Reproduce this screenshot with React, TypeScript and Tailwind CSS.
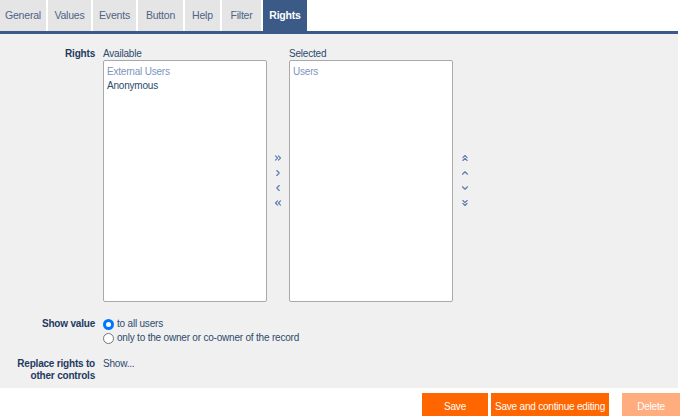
import React from "react";
import { ChevronRight, ChevronLeft, ChevronsRight, ChevronsLeft, ChevronUp, ChevronDown, ChevronsUp, ChevronsDown } from "lucide-react";

const TABS = [
  { name: "General", w: "w-[46px]" },
  { name: "Values", w: "w-[43px]" },
  { name: "Events", w: "w-[43px]" },
  { name: "Button", w: "w-[45px]" },
  { name: "Help", w: "w-[35px]" },
  { name: "Filter", w: "w-[39px]" },
  { name: "Rights", w: "w-[44px]", active: true },
];

function Radio({ checked }: { checked?: boolean }) {
  return checked ? (
    <span className="w-[11px] h-[11px] rounded-full bg-[#0075ff] flex items-center justify-center shrink-0">
      <span className="w-[5px] h-[5px] rounded-full bg-white" />
    </span>
  ) : (
    <span className="w-[11px] h-[11px] rounded-full border border-[#767676] bg-white shrink-0" />
  );
}

export default function App() {
  const arrowCls = "text-[#5b7bb0]";
  return (
    <div className="w-[680px] h-[416px] overflow-hidden bg-white text-[10px] tracking-[-0.2px] text-[#2d4a6e] font-['Liberation_Sans',Arial,sans-serif]">
      {/* Tabs */}
      <div className="flex gap-[2px] h-[31px]">
        {TABS.map((t) => (
          <div
            key={t.name}
            className={`${t.w} flex items-center justify-center text-[10.5px] ${t.active ? "bg-[#3b5a87] text-white font-bold" : "bg-[#e5e5e5] text-[#4d6485]"}`}
          >
            {t.name}
          </div>
        ))}
      </div>
      <div className="w-[678px] h-[3px] bg-[#3b5a87]" />

      {/* Panel */}
      <div className="w-[678px] h-[354px] bg-[#f0f0f0] pt-[13px]">
        {/* Rights */}
        <div className="flex">
          <div className="w-[96px] text-right font-bold text-[#1f3a60] leading-[13px] pr-[1px]">Rights</div>
          <div className="ml-[7px] flex">
            <div className="flex flex-col">
              <div className="leading-[13px]">Available</div>
              <div className="w-[164px] h-[242px] bg-white border border-[#a9a9a9] rounded-[2px] pl-[3px] pt-[4px] leading-[14px]">
                <div className="text-[#7b96c0]">External Users</div>
                <div className="text-[#2d4a6e]">Anonymous</div>
              </div>
            </div>
            <div className="w-[22px] flex flex-col items-center justify-center gap-[5px] pt-[11px]">
              <ChevronsRight size={10} strokeWidth={2.8} className={arrowCls} />
              <ChevronRight size={10} strokeWidth={2.8} className={arrowCls} />
              <ChevronLeft size={10} strokeWidth={2.8} className={arrowCls} />
              <ChevronsLeft size={10} strokeWidth={2.8} className={arrowCls} />
            </div>
            <div className="flex flex-col">
              <div className="leading-[13px]">Selected</div>
              <div className="w-[164px] h-[242px] bg-white border border-[#a9a9a9] rounded-[2px] pl-[3px] pt-[4px] leading-[14px]">
                <div className="text-[#7b96c0]">Users</div>
              </div>
            </div>
            <div className="w-[24px] flex flex-col items-center justify-center gap-[5px] pt-[11px]">
              <ChevronsUp size={10} strokeWidth={2.8} className={arrowCls} />
              <ChevronUp size={10} strokeWidth={2.8} className={arrowCls} />
              <ChevronDown size={10} strokeWidth={2.8} className={arrowCls} />
              <ChevronsDown size={10} strokeWidth={2.8} className={arrowCls} />
            </div>
          </div>
        </div>

        {/* Show value */}
        <div className="flex mt-[15px]">
          <div className="w-[96px] text-right font-bold text-[#1f3a60] leading-[14px] pr-[1px]">Show value</div>
          <div className="ml-[7px] flex flex-col">
            <label className="flex items-center gap-[3px] leading-[14px]">
              <Radio checked />
              <span>to all users</span>
            </label>
            <label className="flex items-center gap-[3px] leading-[14px]">
              <Radio />
              <span>only to the owner or co-owner of the record</span>
            </label>
          </div>
        </div>

        {/* Replace rights */}
        <div className="flex mt-[13px]">
          <div className="w-[96px] text-right font-bold text-[#1f3a60] leading-[12px] pr-[1px]">
            Replace rights to
            <br />
            other controls
          </div>
          <div className="ml-[7px] leading-[12px]">Show...</div>
        </div>
      </div>

      {/* Buttons */}
      <div className="flex justify-end gap-[3px] pt-[5px]">
        <button className="w-[66px] h-[26px] bg-[#ff6600] text-white">Save</button>
        <button className="w-[118px] h-[26px] bg-[#ff6600] text-white">Save and continue editing</button>
        <button className="w-[58px] h-[26px] bg-[#ffad7f] text-white ml-[10px]">Delete</button>
      </div>
    </div>
  );
}
